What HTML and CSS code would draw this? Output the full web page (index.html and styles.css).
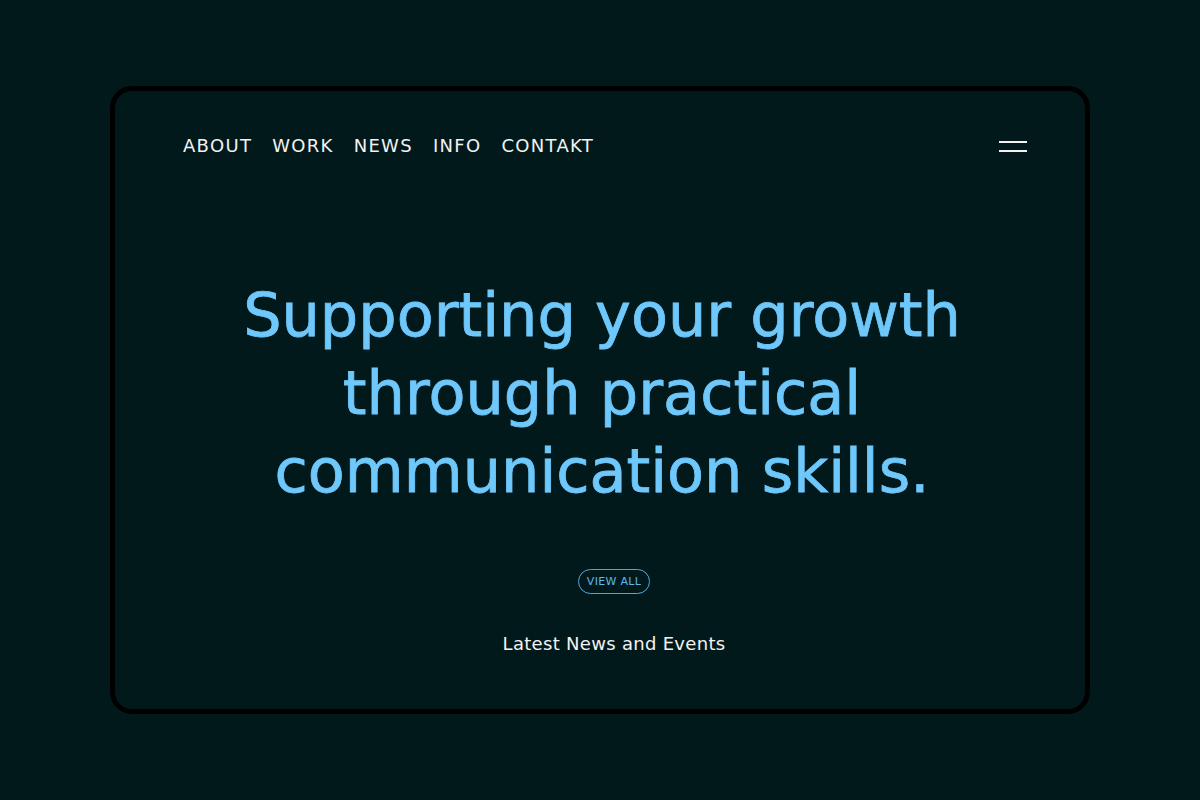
FILE: index.html
```html
<!DOCTYPE html>
<html lang="en">
<head>
<meta charset="utf-8">
<title>Supporting your growth</title>
<link rel="stylesheet" href="styles.css">
</head>
<body>
<div class="frame">
  <header class="nav">
    <nav class="links">
      <a href="#">ABOUT</a>
      <a href="#">WORK</a>
      <a href="#">NEWS</a>
      <a href="#">INFO</a>
      <a href="#">CONTAKT</a>
    </nav>
    <button class="burger" aria-label="Menu"><span></span><span></span></button>
  </header>
  <main class="hero">
    <h1 class="title">Supporting your growth<br>through practical<br>communication skills.</h1>
    <a class="pill" href="#">VIEW ALL</a>
    <p class="latest">Latest News and Events</p>
  </main>
</div>
</body>
</html>
```
FILE: styles.css
```css
html, body {
  margin: 0;
  padding: 0;
  background: #02191b;
  font-family: "DejaVu Sans", sans-serif;
}
.frame {
  box-sizing: border-box;
  width: 980px;
  height: 628px;
  margin: 86px 0 0 110px;
  border: 5px solid #000;
  border-radius: 22px;
  background: #02191b;
  display: flex;
  flex-direction: column;
}
.nav {
  display: flex;
  justify-content: space-between;
  align-items: center;
  padding: 40px 58px 0 68px;
  height: 28px;
}
.links {
  display: flex;
  gap: 20px;
}
.links a {
  color: #f2f2f2;
  text-decoration: none;
  font-size: 18px;
  letter-spacing: 1.3px;
}
.burger {
  background: none;
  border: 0;
  padding: 0;
  width: 28px;
  height: 11px;
  margin-top: 2px;
  display: flex;
  flex-direction: column;
  justify-content: space-between;
  cursor: pointer;
}
.burger span {
  display: block;
  height: 2px;
  background: #f2f2f2;
}
.hero {
  display: flex;
  flex-direction: column;
  align-items: center;
  padding-top: 117px;
}
.title {
  margin: 0 0 0 4px;
  text-align: center;
  color: #6ec8fb;
  font-size: 60.5px;
  line-height: 78px;
  font-weight: 500;
  -webkit-text-stroke: 0.8px #6ec8fb;
}
.pill {
  margin-top: 59px;
  margin-left: 28px;
  display: inline-block;
  box-sizing: border-box;
  height: 25px;
  line-height: 23px;
  padding: 0 8px;
  border: 1px solid #4fa8df;
  border-radius: 12.5px;
  color: #5db8ee;
  font-size: 11px;
  letter-spacing: 0.3px;
  text-decoration: none;
}
.latest {
  margin: 39px 0 0 28px;
  color: #f2f2f2;
  font-size: 18px;
  letter-spacing: 0.3px;
}
```
